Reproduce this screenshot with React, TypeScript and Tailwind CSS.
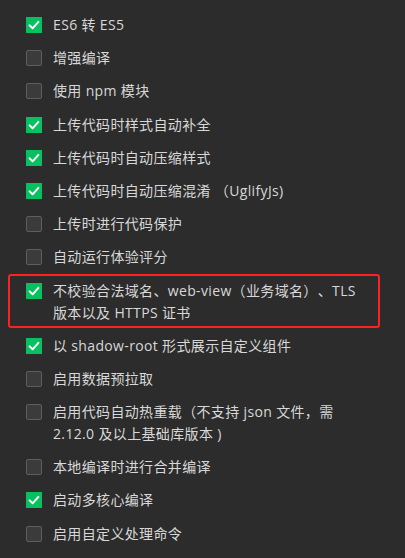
import React from "react";

type Item = { checked: boolean; lines: string[]; highlight?: boolean };

const items: Item[] = [
  { checked: true, lines: ["ES6 转 ES5"] },
  { checked: false, lines: ["增强编译"] },
  { checked: false, lines: ["使用 npm 模块"] },
  { checked: true, lines: ["上传代码时样式自动补全"] },
  { checked: true, lines: ["上传代码时自动压缩样式"] },
  { checked: true, lines: ["上传代码时自动压缩混淆 （UglifyJs)"] },
  { checked: false, lines: ["上传时进行代码保护"] },
  { checked: false, lines: ["自动运行体验评分"] },
  {
    checked: true,
    lines: ["不校验合法域名、web-view（业务域名）、TLS", "版本以及 HTTPS 证书"],
    highlight: true,
  },
  { checked: true, lines: ["以 shadow-root 形式展示自定义组件"] },
  { checked: false, lines: ["启用数据预拉取"] },
  {
    checked: false,
    lines: ["启用代码自动热重载（不支持 json 文件，需", "2.12.0 及以上基础库版本 )"],
  },
  { checked: false, lines: ["本地编译时进行合并编译"] },
  { checked: true, lines: ["启动多核心编译"] },
  { checked: false, lines: ["启用自定义处理命令"] },
];

function Box({ checked }: { checked: boolean }) {
  if (checked) {
    return (
      <div className="mt-[3px] flex h-4 w-4 shrink-0 items-center justify-center bg-[#07c160]">
        <svg width="16" height="16" viewBox="0 0 16 16" fill="none">
          <path d="M3.6 8.4 L6.6 11.3 L12.4 4.9" stroke="#ffffff" strokeWidth="2" strokeLinecap="round" strokeLinejoin="round" />
        </svg>
      </div>
    );
  }
  return <div className="mt-[3px] h-4 w-4 shrink-0 rounded-[2px] border border-[#5e5e5e] bg-[#3b3b3b]" />;
}

export default function App() {
  return (
    <div
      className="flex h-[558px] w-[405px] flex-col gap-[11.2px] overflow-hidden bg-[#2c2c2c] pl-[26px] pt-[14px] text-[14px] leading-[22px] text-[#d8d8d8] [text-spacing-trim:space-all]"
      style={{ fontFamily: '"Open Sans", "Noto Sans CJK SC", sans-serif' }}
    >
      {items.map((it, i) => (
        <div key={i} className="relative flex items-start gap-[11px]">
          <Box checked={it.checked} />
          <div className="tracking-[0.35px] whitespace-nowrap">
            {it.lines.map((l, j) => (
              <div key={j}>{l}</div>
            ))}
          </div>
          {it.highlight && (
            <div className="pointer-events-none absolute left-[-18px] right-[25px] top-[-6px] bottom-[-4px] rounded-[3px] border-[2.5px] border-[#ff2121]" />
          )}
        </div>
      ))}
    </div>
  );
}
